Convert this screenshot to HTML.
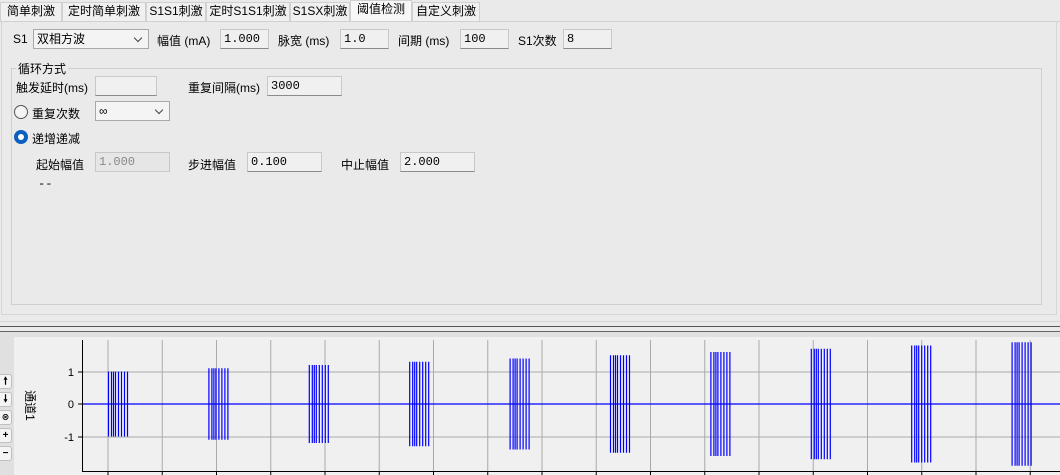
<!DOCTYPE html>
<html><head><meta charset="utf-8"><style>
*{box-sizing:border-box;margin:0;padding:0}
body{width:1060px;height:475px;overflow:hidden;background:#eaeaea;font-family:"Liberation Sans","Noto Sans CJK SC",sans-serif;font-size:12px;color:#000;position:relative}
.a{position:absolute;white-space:nowrap}
.tab{position:absolute;top:2px;height:19px;border:1px solid #d0d0d0;border-bottom:none;background:#f0f0f0;font-size:12px;line-height:17px;text-align:center}
.inp{position:absolute;height:20px;background:#f0f0f0;border:1px solid #c8c8c8;border-bottom:1px solid #8a8a8a;font-size:12px;line-height:18px;padding-left:3px;font-family:"Liberation Mono","Noto Sans CJK SC",monospace}
.cb{position:absolute;height:20px;background:#f4f4f4;border:1px solid #a8a8a8;font-size:12px;line-height:18px;padding-left:3px}
.cb:after{content:"";position:absolute;right:7px;top:5px;width:5px;height:5px;border-right:1px solid #444;border-bottom:1px solid #444;transform:rotate(45deg)}
.btn{position:absolute;left:0;width:12px;height:15px;background:#f4f4f4;border:1px solid #c0c0c0;border-left:none;border-radius:0 3px 3px 0;font-size:10px;line-height:13px;text-align:center;font-weight:bold}
</style></head><body>
<div class="tab" style="left:0;width:62px">简单刺激</div>
<div class="tab" style="left:62px;width:84px">定时简单刺激</div>
<div class="tab" style="left:146px;width:60px">S1S1刺激</div>
<div class="tab" style="left:206px;width:84px">定时S1S1刺激</div>
<div class="tab" style="left:290px;width:60px">S1SX刺激</div>
<div class="tab" style="left:350px;width:62px;top:0;height:22px;background:#f7f7f7">阈值检测</div>
<div class="tab" style="left:412px;width:68px">自定义刺激</div>
<div class="a" style="left:0;top:21px;width:1060px;height:1px;background:#d0d0d0"></div>
<div class="a" style="left:1px;top:22px;width:1056px;height:293px;border:1px solid #d6d6d6;border-top:none"></div>
<div class="a" style="left:0;top:321px;width:1060px;height:1px;background:#d6d6d6"></div>

<div class="a" style="left:13px;top:32px">S1</div>
<div class="cb" style="left:33px;top:29px;width:116px">双相方波</div>
<div class="a" style="left:157px;top:32px">幅值 (mA)</div>
<div class="inp" style="left:220px;top:29px;width:49px">1.000</div>
<div class="a" style="left:278px;top:32px">脉宽 (ms)</div>
<div class="inp" style="left:340px;top:29px;width:49px">1.0</div>
<div class="a" style="left:398px;top:32px">间期 (ms)</div>
<div class="inp" style="left:460px;top:29px;width:49px">100</div>
<div class="a" style="left:518px;top:32px">S1次数</div>
<div class="inp" style="left:563px;top:29px;width:49px">8</div>

<div class="a" style="left:11px;top:68px;width:1031px;height:237px;border:1px solid #cfcfcf"></div>
<div class="a" style="left:16px;top:60px;background:#eaeaea;padding:0 2px">循环方式</div>
<div class="a" style="left:16px;top:79px">触发延时(ms)</div>
<div class="inp" style="left:95px;top:76px;width:62px"></div>
<div class="a" style="left:188px;top:79px">重复间隔(ms)</div>
<div class="inp" style="left:267px;top:76px;width:75px">3000</div>
<div class="a" style="left:14px;top:105px;width:14px;height:14px;border:1px solid #555;border-radius:50%;background:#f4f4f4"></div>
<div class="a" style="left:32px;top:105px">重复次数</div>
<div class="cb" style="left:95px;top:101px;width:75px">∞</div>
<div class="a" style="left:14px;top:130px;width:14px;height:14px;border-radius:50%;background:#0a5fbf"><div class="a" style="left:4px;top:4px;width:6px;height:6px;border-radius:50%;background:#fff"></div></div>
<div class="a" style="left:32px;top:130px">递增递减</div>
<div class="a" style="left:36px;top:156px">起始幅值</div>
<div class="inp" style="left:95px;top:152px;width:75px;color:#888;background:#e6e6e6;border-bottom-color:#ccc">1.000</div>
<div class="a" style="left:188px;top:156px">步进幅值</div>
<div class="inp" style="left:247px;top:152px;width:75px">0.100</div>
<div class="a" style="left:341px;top:156px">中止幅值</div>
<div class="inp" style="left:400px;top:152px;width:75px">2.000</div>
<div class="a" style="left:38px;top:177px;font-family:'Liberation Mono',monospace">--</div>

<div class="a" style="left:0;top:326px;width:1060px;height:1px;background:#555"></div>
<div class="a" style="left:0;top:331px;width:1060px;height:1px;background:#666"></div>
<div class="a" style="left:0;top:332px;width:1060px;height:143px;background:#e0e0e0"></div>
<svg class="a" style="left:0;top:0" width="1060" height="475" id="p">
<rect x="14" y="337" width="1046" height="138" fill="#f0f0f0"/>
</svg>
<div class="btn" style="top:374px">🠕</div>
<div class="btn" style="top:392px">🠗</div>
<div class="btn" style="top:410px;font-size:8px">⊗</div>
<div class="btn" style="top:428px">+</div>
<div class="btn" style="top:446px">−</div>
<div class="a" style="left:15px;top:397px;transform:rotate(90deg);font-size:12px">通道1</div>
<script>
var s=document.getElementById('p'),h='';
for(var k=0;k<18;k++){var x=108+54.25*k;if(x>1035)break;h+='<line x1="'+x+'" y1="340" x2="'+x+'" y2="471" stroke="#aaa"/>';h+='<line x1="'+x+'" y1="471" x2="'+x+'" y2="475" stroke="#000"/>';}
[372,437,404].forEach(function(y){h+='<line x1="82" y1="'+y+'" x2="1060" y2="'+y+'" stroke="#aaa"/><line x1="78" y1="'+y+'" x2="82" y2="'+y+'" stroke="#000"/>';});
h+='<line x1="82.5" y1="340" x2="82.5" y2="471" stroke="#000"/><line x1="82" y1="471.5" x2="1060" y2="471.5" stroke="#000"/>';
h+='<text x="74" y="376" font-size="11" text-anchor="end" font-family="Liberation Sans">1</text><text x="74" y="408" font-size="11" text-anchor="end" font-family="Liberation Sans">0</text><text x="74" y="441" font-size="11" text-anchor="end" font-family="Liberation Sans">-1</text>';
h+='<line x1="83" y1="404" x2="1060" y2="404" stroke="#00f" stroke-width="1.3"/>';
var off=[0,3,5,7,10,13,16,19];
for(var b=0;b<10;b++){var x0=108.5+100.4*b,a=32.5*(1+0.1*b);
for(var i=0;i<8;i++){var x=x0+off[i];h+='<line x1="'+x+'" y1="'+(404-a)+'" x2="'+x+'" y2="'+(404+a)+'" stroke="#00f" stroke-width="1.2"/>';}}
s.innerHTML+=h;
</script>
</body></html>
